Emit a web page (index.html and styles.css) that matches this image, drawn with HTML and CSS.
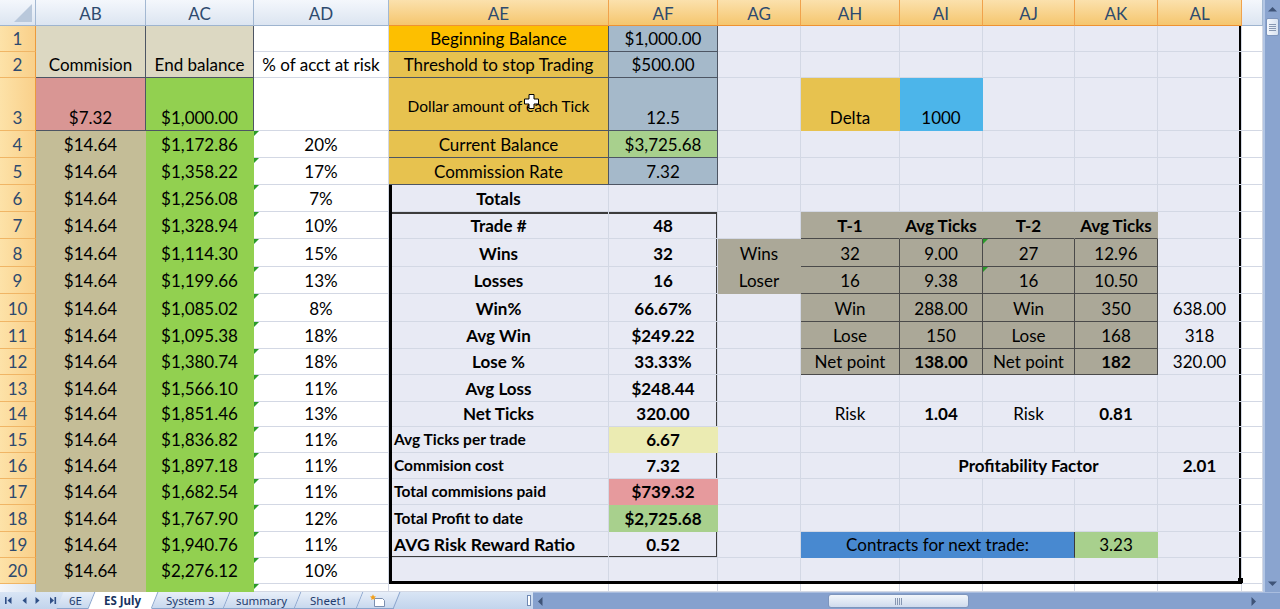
FILE: index.html
```html
<!DOCTYPE html>
<html lang="en">
<head>
<meta charset="utf-8">
<title>ES July</title>
<link rel="stylesheet" href="styles.css">
</head>
<body>
<div class="app">
 <div class="main">
  <div class="sheet">
   <div class="layer bg"><div class="selbg"></div></div>
   <div class="layer cells">
    <div class="corner"><svg width="35" height="25" viewBox="0 0 35 25"><path d="M32 4V22H14z" fill="#b9c8db"/></svg></div>
    <div class="h">AB</div><div class="h">AC</div><div class="h">AD</div>
    <div class="hs">AE</div><div class="hs">AF</div><div class="hs">AG</div><div class="hs">AH</div>
    <div class="hs">AI</div><div class="hs">AJ</div><div class="hs">AK</div><div class="hs">AL</div>
    <div class="h"></div>

    <!-- row 1 -->
    <div class="r">1</div>
    <div class="c beige dk rs2">Commision</div>
    <div class="c beige dk rs2">End balance</div>
    <div class="c"></div>
    <div class="c gold1 dk">Beginning Balance</div>
    <div class="c slate dk">$1,000.00</div>
    <div class="c"></div><div class="c"></div><div class="c"></div><div class="c"></div><div class="c"></div><div class="c"></div><div class="c"></div>

    <!-- row 2 -->
    <div class="r">2</div>
    <div class="c">% of acct at risk</div>
    <div class="c gold dk">Threshold to stop Trading</div>
    <div class="c slate dk">$500.00</div>
    <div class="c"></div><div class="c"></div><div class="c"></div><div class="c"></div><div class="c"></div><div class="c"></div><div class="c"></div>

    <!-- row 3 -->
    <div class="r">3</div>
    <div class="c pink dk">$7.32</div>
    <div class="c green dk">$1,000.00</div>
    <div class="c"></div>
    <div class="c gold dk mid">Dollar amount of each Tick<svg class="cursor" width="15" height="15" viewBox="0 0 15 15"><path d="M5 .5h5v4.5h4.5v5H10v4.5H5V10H.5V5H5z" fill="#fff" stroke="#000"/></svg></div>
    <div class="c slate dk">12.5</div>
    <div class="c"></div>
    <div class="c gold">Delta</div>
    <div class="c sky">1000</div>
    <div class="c"></div><div class="c"></div><div class="c"></div><div class="c"></div>

    <!-- row 4 -->
    <div class="r">4</div>
    <div class="c tan">$14.64</div><div class="c green">$1,172.86</div><div class="c tri">20%</div>
    <div class="c gold dk">Current Balance</div>
    <div class="c lgreen dk">$3,725.68</div>
    <div class="c"></div><div class="c"></div><div class="c"></div><div class="c"></div><div class="c"></div><div class="c"></div><div class="c"></div>

    <!-- row 5 -->
    <div class="r">5</div>
    <div class="c tan">$14.64</div><div class="c green">$1,358.22</div><div class="c tri">17%</div>
    <div class="c gold dk">Commission Rate</div>
    <div class="c slate dk">7.32</div>
    <div class="c"></div><div class="c"></div><div class="c"></div><div class="c"></div><div class="c"></div><div class="c"></div><div class="c"></div>

    <!-- row 6 -->
    <div class="r">6</div>
    <div class="c tan">$14.64</div><div class="c green">$1,256.08</div><div class="c tri">7%</div>
    <div class="c b">Totals</div>
    <div class="c"></div>
    <div class="c"></div><div class="c"></div><div class="c"></div><div class="c"></div><div class="c"></div><div class="c"></div><div class="c"></div>

    <!-- row 7 -->
    <div class="r">7</div>
    <div class="c tan">$14.64</div><div class="c green">$1,328.94</div><div class="c tri">10%</div>
    <div class="c b">Trade #</div><div class="c b">48</div>
    <div class="c"></div>
    <div class="c tg b">T-1</div><div class="c tg b">Avg Ticks</div><div class="c tg b">T-2</div><div class="c tg b">Avg Ticks</div>
    <div class="c"></div><div class="c"></div>

    <!-- row 8 -->
    <div class="r">8</div>
    <div class="c tan">$14.64</div><div class="c green">$1,114.30</div><div class="c tri">15%</div>
    <div class="c b">Wins</div><div class="c b">32</div>
    <div class="c tan2">Wins</div>
    <div class="c tg tv">32</div><div class="c tg tv">9.00</div><div class="c tg tv tri">27</div><div class="c tg tv">12.96</div>
    <div class="c"></div><div class="c"></div>

    <!-- row 9 -->
    <div class="r">9</div>
    <div class="c tan">$14.64</div><div class="c green">$1,199.66</div><div class="c tri">13%</div>
    <div class="c b">Losses</div><div class="c b">16</div>
    <div class="c tan2">Loser</div>
    <div class="c tg tv">16</div><div class="c tg tv">9.38</div><div class="c tg tv tri">16</div><div class="c tg tv">10.50</div>
    <div class="c"></div><div class="c"></div>

    <!-- row 10 -->
    <div class="r">10</div>
    <div class="c tan">$14.64</div><div class="c green">$1,085.02</div><div class="c tri">8%</div>
    <div class="c b">Win%</div><div class="c b">66.67%</div>
    <div class="c"></div>
    <div class="c tg tv">Win</div><div class="c tg tv">288.00</div><div class="c tg tv">Win</div><div class="c tg tv">350</div>
    <div class="c">638.00</div><div class="c"></div>

    <!-- row 11 -->
    <div class="r">11</div>
    <div class="c tan">$14.64</div><div class="c green">$1,095.38</div><div class="c tri">18%</div>
    <div class="c b">Avg Win</div><div class="c b">$249.22</div>
    <div class="c"></div>
    <div class="c tg tv">Lose</div><div class="c tg tv">150</div><div class="c tg tv">Lose</div><div class="c tg tv">168</div>
    <div class="c">318</div><div class="c"></div>

    <!-- row 12 -->
    <div class="r">12</div>
    <div class="c tan">$14.64</div><div class="c green">$1,380.74</div><div class="c tri">18%</div>
    <div class="c b">Lose %</div><div class="c b">33.33%</div>
    <div class="c"></div>
    <div class="c tg tv">Net point</div><div class="c tg tv b">138.00</div><div class="c tg tv">Net point</div><div class="c tg tv b">182</div>
    <div class="c">320.00</div><div class="c"></div>

    <!-- row 13 -->
    <div class="r">13</div>
    <div class="c tan">$14.64</div><div class="c green">$1,566.10</div><div class="c tri">11%</div>
    <div class="c b">Avg Loss</div><div class="c b">$248.44</div>
    <div class="c"></div><div class="c"></div><div class="c"></div><div class="c"></div><div class="c"></div><div class="c"></div><div class="c"></div>

    <!-- row 14 -->
    <div class="r">14</div>
    <div class="c tan">$14.64</div><div class="c green">$1,851.46</div><div class="c tri">13%</div>
    <div class="c b">Net Ticks</div><div class="c b">320.00</div>
    <div class="c"></div>
    <div class="c">Risk</div><div class="c b">1.04</div><div class="c">Risk</div><div class="c b">0.81</div>
    <div class="c"></div><div class="c"></div>

    <!-- row 15 -->
    <div class="r">15</div>
    <div class="c tan">$14.64</div><div class="c green">$1,836.82</div><div class="c tri">11%</div>
    <div class="c b sm l">Avg Ticks per trade</div><div class="c yel b">6.67</div>
    <div class="c"></div><div class="c"></div><div class="c"></div><div class="c"></div><div class="c"></div><div class="c"></div><div class="c"></div>

    <!-- row 16 -->
    <div class="r">16</div>
    <div class="c tan">$14.64</div><div class="c green">$1,897.18</div><div class="c tri">11%</div>
    <div class="c b sm l">Commision cost</div><div class="c b">7.32</div>
    <div class="c"></div><div class="c"></div>
    <div class="c b cs3">Profitability Factor</div>
    <div class="c b">2.01</div><div class="c"></div>

    <!-- row 17 -->
    <div class="r">17</div>
    <div class="c tan">$14.64</div><div class="c green">$1,682.54</div><div class="c tri">11%</div>
    <div class="c b sm l">Total commisions paid</div><div class="c rose b">$739.32</div>
    <div class="c"></div><div class="c"></div><div class="c"></div><div class="c"></div><div class="c"></div><div class="c"></div><div class="c"></div>

    <!-- row 18 -->
    <div class="r">18</div>
    <div class="c tan">$14.64</div><div class="c green">$1,767.90</div><div class="c tri">12%</div>
    <div class="c b sm l">Total Profit to date</div><div class="c lgreen b">$2,725.68</div>
    <div class="c"></div><div class="c"></div><div class="c"></div><div class="c"></div><div class="c"></div><div class="c"></div><div class="c"></div>

    <!-- row 19 -->
    <div class="r">19</div>
    <div class="c tan">$14.64</div><div class="c green">$1,940.76</div><div class="c tri">11%</div>
    <div class="c b big l">AVG Risk Reward Ratio</div><div class="c b">0.52</div>
    <div class="c"></div>
    <div class="c blue cs3 dkr">Contracts for next trade:</div>
    <div class="c lgreen">3.23</div>
    <div class="c"></div><div class="c"></div>

    <!-- row 20 -->
    <div class="r">20</div>
    <div class="c tan">$14.64</div><div class="c green">$2,276.12</div><div class="c tri">10%</div>
    <div class="c"></div><div class="c"></div><div class="c"></div><div class="c"></div><div class="c"></div><div class="c"></div><div class="c"></div><div class="c"></div><div class="c"></div>

    <!-- row 21 (only a sliver shows above the tab bar) -->
    <div class="r r21"></div>
    <div class="c tan"></div><div class="c green"></div><div class="c tri"></div>
    <div class="c"></div><div class="c"></div><div class="c"></div><div class="c"></div><div class="c"></div><div class="c"></div><div class="c"></div><div class="c"></div><div class="c"></div>
   </div>
   <div class="layer ov">
    <div class="freeze"></div>
    <div class="blue-left"></div>
    <div class="tbl-main"></div>
    <div class="tbl-ticks"></div>
    <div class="ticks-split"></div>
    <div class="ticks-hsplit"></div>
    <div class="contracts"></div>
    <div class="frame-right"></div>
    <div class="frame"></div>
   </div>
  </div>
  <div class="vscroll">
   <div class="vbtn"><svg width="9" height="6" viewBox="0 0 9 6"><path d="M0 5.5L4.5 1 9 5.5z" fill="#3f5478"/></svg></div>
   <div class="vthumb"><svg width="7" height="7" viewBox="0 0 7 7"><path d="M0 .5h7M0 2.5h7M0 4.5h7M0 6.5h7" stroke="#8797b2"/></svg></div>
   <div class="vtrack"></div>
   <div class="vbtn"><svg width="9" height="6" viewBox="0 0 9 6"><path d="M0 .5L4.5 5 9 .5z" fill="#3f5478"/></svg></div>
  </div>
 </div>
 <div class="tabbar">
  <div class="nav">
   <svg width="60" height="17" viewBox="0 0 60 17"><g fill="#2f4f86"><rect x="5" y="5" width="1.6" height="7"/><path d="M11.5 5v7L7.5 8.5z"/><path d="M26.5 5v7l-4-3.5z"/><path d="M35.5 5v7l4-3.5z"/><path d="M50 5v7l4-3.5z"/><rect x="54.5" y="5" width="1.6" height="7"/></g></svg>
  </div>
  <div class="tabs">
   <div class="tab w-6e"><span>6E</span></div>
   <div class="tab act w-es"><span>ES July</span></div>
   <div class="tab w-sys"><span>System 3</span></div>
   <div class="tab w-sum"><span>summary</span></div>
   <div class="tab w-sh"><span>Sheet1</span></div>
   <div class="tab w-new"><span><svg width="18" height="13" viewBox="0 0 18 13"><path d="M5.5 4.5h8l2 2v6h-10z" fill="#fff" stroke="#7b8fb0"/><path d="M4 .3l.9 2 2.1.3-1.6 1.4.5 2.1L4 5 2.1 6.1l.5-2.1L1 2.6l2.1-.3z" fill="#f2a01c"/></svg></span></div>
  </div>
  <div class="tabgap"></div>
  <div class="split"><i></i></div>
  <div class="hsb">
   <div class="harr la"><svg width="6" height="9" viewBox="0 0 6 9"><path d="M5.5 0L1 4.5 5.5 9z" fill="#3f5478"/></svg></div>
   <div class="htrack"><div class="hthumb"><svg width="7" height="7" viewBox="0 0 7 7"><path d="M.5 0v7M2.5 0v7M4.5 0v7M6.5 0v7" stroke="#8797b2"/></svg></div></div>
   <div class="harr ra"><svg width="6" height="9" viewBox="0 0 6 9"><path d="M.5 0L5 4.5 .5 9z" fill="#3f5478"/></svg></div>
   <div class="hcorner"></div>
  </div>
 </div>
</div>
</body>
</html>
```

FILE: styles.css
```css
* { box-sizing: border-box; margin: 0; padding: 0; }
html, body { width: 1280px; height: 609px; overflow: hidden; background: #fff; }
body { font-family: Lato, "Liberation Sans", sans-serif; color: #000; }

.app { display: flex; flex-direction: column; width: 1280px; height: 609px; }
.main { display: flex; height: 592px; }

/* ---------- sheet grid (three stacked layers) ---------- */
.sheet { display: grid; width: 1263px; height: 592px; overflow: hidden; }
.layer {
  grid-area: 1 / 1;
  display: grid;
  width: 1263px; height: 592px;
  grid-template-columns: 36px 110px 108px 135px 220px 109px 83px 99px 83px 92px 83px 84px 21px;
  grid-template-rows: 26px 26px 26px 53px 27px 27px 27px 27px 28px 27px 28px 27px 26px 27px 25px 26px 26px 26px 27px 26px 26px 8px;
}
.ov { pointer-events: none; }

.selbg { grid-row: 2 / 22; grid-column: 5 / 13; background: #e8eaf4; }

/* headers */
.corner, .h, .hs {
  display: flex; align-items: center; justify-content: center;
  font-size: 17px; color: #2e4a6e; padding-top: 1px;
  border-right: 1px solid #a3b8d2; border-bottom: 1px solid #9eb4cf;
  background: linear-gradient(#f4f7fc, #dce5f1);
}
.corner { align-items: stretch; justify-content: flex-start; padding: 0; }
.hs {
  background: linear-gradient(#fbe1ad, #f5c66e);
  border-right-color: #f0a24c; border-bottom-color: #ee9232;
}
.r {
  display: flex; align-items: flex-end; justify-content: center;
  font-size: 17px; line-height: 24px; color: #2e4a6e;
  background: linear-gradient(90deg, #fde2a8, #f9d08a);
  border-right: 1px solid #eb9a3c; border-bottom: 1px solid #f0b565;
}
.r21 { background: linear-gradient(90deg, #f4f7fc, #dce5f1); border-right-color: #9eb4cf; border-bottom: 0; }

/* cells */
.c {
  position: relative;
  display: flex; align-items: flex-end; justify-content: center;
  padding: 0 3px;
  border-right: 1px solid #d3d8e4; border-bottom: 1px solid #d3d8e4;
  font-size: 17px; line-height: 24px;
  white-space: nowrap; overflow: hidden;
}
.b { font-weight: 700; }
.l { justify-content: flex-start; padding-left: 5px; }
.sm { font-size: 15.5px; padding-bottom: 1px; }
.big { font-size: 17.5px; }
.mid { font-size: 15.5px; line-height: 20px; padding-bottom: 14px; }
.rs2 { grid-row: span 2; }
.cs3 { grid-column: span 3; }

/* fills (Excel hides gridlines on filled cells) */
.beige, .pink, .green, .tan, .gold1, .gold, .slate, .lgreen, .sky, .tg, .tan2, .yel, .rose, .blue { border-color: transparent; }
.beige { background: #dcd8c2; }
.pink { background: #d99694; }
.green { background: #92d050; }
.tan { background: #c4bd97; }
.gold1 { background: #fdbf00; }
.gold { background: #e7c24f; }
.slate { background: #a5b9ca; }
.lgreen { background: #a8d08d; }
.sky { background: #4cb5ea; }
.tg, .tan2 { background: #aba898; }
.yel { background: #ebebb2; }
.rose { background: #e69a9d; }
.blue { background: #4889d0; }

.dk { border-right-color: #4d5563; border-bottom-color: #4d5563; }
.dkr { border-right-color: #3a3a3a; }
.tg { border-bottom-color: #4a4a4a; }
.tv { border-right-color: #4a4a4a; }

/* green error-indicator triangles */
.tri::before {
  content: ""; position: absolute; left: 0; top: 0;
  border-top: 5px solid #2a9a2a; border-right: 5px solid transparent;
}

.cursor { position: absolute; left: 135px; top: 16px; }

/* ---------- overlays ---------- */
.freeze { grid-row: 4; grid-column: 2 / 14; border-bottom: 1px solid #000; }
.blue-left { grid-row: 2 / 7; grid-column: 5; border-left: 1px solid #3a6fd8; }
.tbl-main { grid-row: 8 / 21; grid-column: 5 / 7; border: 2px solid #3c3c3c; }
.tbl-ticks { grid-row: 8 / 14; grid-column: 8 / 12; border: 2px solid #454545; }
.ticks-split { grid-row: 8 / 14; grid-column: 9; border-right: 3px solid #454545; }
.ticks-hsplit { grid-row: 11; grid-column: 8 / 12; border-top: 2px solid #454545; }
.contracts { grid-row: 20; grid-column: 8 / 12; border: 1px solid #333; }
.frame-right { grid-row: 2 / 22; grid-column: 12; border-right: 3px solid #000; }
.frame { grid-row: 7 / 22; grid-column: 5 / 13; border-left: 3px solid #000; border-bottom: 3px solid #000; position: relative; }
.frame::after {
  content: ""; position: absolute; right: -1px; bottom: -2px;
  width: 5px; height: 5px; background: #000;
}

/* ---------- vertical scrollbar ---------- */
.vscroll {
  width: 17px; height: 592px; display: flex; flex-direction: column;
  background: #8aa4cf; border-left: 2px solid #b3c6e4;
}
.vbtn { height: 17px; display: flex; align-items: center; justify-content: center; }
.vthumb {
  height: 18px; margin: 1px 1px 0 1px;
  display: flex; align-items: center; justify-content: center;
  background: linear-gradient(90deg, #f4f7fc, #d8e2f0);
  border: 1px solid #7d95bd; border-radius: 2px;
}
.vtrack { flex: 1; }

/* ---------- sheet tabs + horizontal scrollbar ---------- */
.tabbar { height: 17px; display: flex; background: linear-gradient(#d9e5f5, #c2d4ec); }
.nav { width: 60px; flex: none; }
.tabs { display: flex; width: 337px; flex: none; }
.tab {
  height: 17px; flex: none;
  display: flex; align-items: center; justify-content: center;
  transform: skewX(-22deg);
  background: linear-gradient(#e8eff9, #c8d8ee);
  border-right: 1px solid #8aa4cc; border-bottom: 1px solid #8aa4cc;
  font-family: "Noto Sans", "DejaVu Sans", sans-serif; font-size: 11.5px; color: #1f3c6e;
}
.tab span { transform: skewX(22deg); display: flex; align-items: center; }
.tab.act { background: #fff; font-weight: 700; color: #17335f; border-bottom-color: #fff; position: relative; z-index: 2; }
.w-6e { width: 32px; }
.w-es { width: 63px; }
.w-sys { width: 72px; }
.w-sum { width: 71px; }
.w-sh { width: 62px; }
.w-new { width: 37px; }
.tabgap { width: 128px; flex: none; }
.split { width: 8px; flex: none; display: flex; align-items: center; justify-content: center; }
.split i { display: block; width: 4px; height: 11px; background: #fff; border: 1px solid #7089b3; }
.hsb { flex: 1; display: flex; background: #86a1ce; border-top: 1px solid #a9bddf; }
.harr { flex: none; display: flex; align-items: center; justify-content: center; }
.la { width: 14px; }
.ra { width: 16px; }
.htrack { flex: 1; display: flex; align-items: center; }
.hthumb {
  margin-left: 281px; width: 141px; height: 14px;
  display: flex; align-items: center; justify-content: center;
  background: linear-gradient(#f2f6fb, #cfdbed);
  border: 1px solid #7d95bd; border-radius: 3px;
}
.hcorner { width: 18px; flex: none; }
```
